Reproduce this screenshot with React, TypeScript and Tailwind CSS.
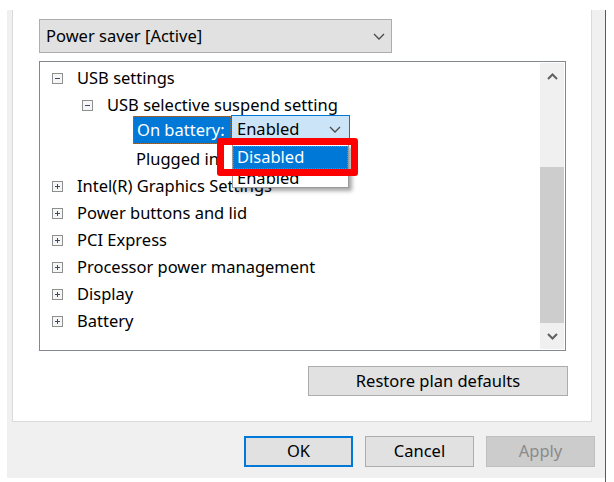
import type { ReactNode } from "react";

function TreeBox({ open }: { open: boolean }) {
  return (
    <svg width="11" height="11" viewBox="0 0 11 11" className="shrink-0">
      <rect x="0.5" y="0.5" width="10" height="10" fill="#f6f6f6" stroke="#8e8f8f" />
      <path d="M3 5.5h5" stroke="#3b4a63" />
      {!open && <path d="M5.5 3v5" stroke="#3b4a63" />}
    </svg>
  );
}

function Chevron({ className = "" }: { className?: string }) {
  return (
    <svg width="12" height="7" viewBox="0 0 12 7" className={className}>
      <path d="M1 1l5 5 5-5" stroke="#4a4a4a" strokeWidth="1.3" fill="none" />
    </svg>
  );
}

function ScrollArrow({ up }: { up?: boolean }) {
  return (
    <svg width="11" height="7" viewBox="0 0 11 7">
      <path
        d={up ? "M1 6l4.5-4.5L10 6" : "M1 1l4.5 4.5L10 1"}
        stroke="#606060"
        strokeWidth="2"
        fill="none"
      />
    </svg>
  );
}

function Row({
  indent,
  open,
  children,
}: {
  indent: string;
  open?: boolean;
  children: ReactNode;
}) {
  return (
    <div className={`flex h-[27px] items-center ${indent}`}>
      <TreeBox open={!!open} />
      <span className="ml-[14px] whitespace-nowrap">{children}</span>
    </div>
  );
}

function DialogButton({
  children,
  variant = "normal",
}: {
  children: ReactNode;
  variant?: "default" | "normal" | "disabled";
}) {
  const look =
    variant === "default"
      ? "border-2 border-[#0078d7] bg-[#e1e1e1] text-black"
      : variant === "disabled"
        ? "border border-[#bfbfbf] bg-[#cccccc] text-[#8a8a8a]"
        : "border border-[#adadad] bg-[#e1e1e1] text-black";
  return (
    <div className={`flex h-[31px] w-[109px] items-center justify-center ${look}`}>
      {children}
    </div>
  );
}

export default function App() {
  return (
    <div className="flex h-[482px] w-[614px] overflow-hidden bg-white pl-[7px] pt-[10px] font-['Noto_Sans',sans-serif] text-[16.5px] leading-none text-black">
      <div className="flex h-[468px] w-[598px] flex-col bg-[#f0f0f0]">
        <div className="ml-[5px] h-[412px] w-[580px] border-x border-b border-[#dadada] bg-white pl-[26px] pt-[9px]">
          {/* power plan picker */}
          <div className="flex h-[34px] w-[353px] items-center justify-between border border-[#adadad] bg-[#e1e1e1] pl-[6px] pr-[6px]">
            <span>Power saver [Active]</span>
            <Chevron />
          </div>

          {/* settings tree */}
          <div className="relative mt-[8px] flex h-[290px] w-[527px] border border-[#828790] bg-white">
            <div className="flex-1 pt-[3px]">
              <Row indent="pl-[12px]" open>
                USB settings
              </Row>
              <Row indent="pl-[42px]" open>
                USB selective suspend setting
              </Row>
              <div className="flex h-[27px] items-start pl-[93px]">
                <div className="-mt-[3px] flex h-[28px] w-[98px] items-center border border-dotted border-[#9a6a3a] bg-[#0078d7] px-[3px] text-white">
                  On battery:
                </div>
                <div className="-mt-[4px] flex h-[28px] w-[119px] items-center justify-between border border-[#0078d7] bg-[#cce4f7] pl-[5px] pr-[8px]">
                  <span>Enabled</span>
                  <Chevron />
                </div>
              </div>
              <div className="flex h-[27px] items-center pl-[96px]">
                <span className="whitespace-nowrap">Plugged in:</span>
              </div>
              <Row indent="pl-[12px]">Intel(R) Graphics Settings</Row>
              <Row indent="pl-[12px]">Power buttons and lid</Row>
              <Row indent="pl-[12px]">PCI Express</Row>
              <Row indent="pl-[12px]">Processor power management</Row>
              <Row indent="pl-[12px]">Display</Row>
              <Row indent="pl-[12px]">Battery</Row>
            </div>

            <div className="my-[1px] mr-[1px] flex w-[24px] flex-col bg-[#f0f0f0]">
              <div className="flex h-[26px] items-center justify-center">
                <ScrollArrow up />
              </div>
              <div className="h-[78px]" />
              <div className="h-[156px] bg-[#cdcdcd]" />
              <div className="flex flex-1 items-center justify-center">
                <ScrollArrow />
              </div>
            </div>

            {/* open dropdown list */}
            <div className="absolute left-[192px] top-[82px] h-[44px] w-[117px] border border-[#9a9a9a] bg-white pt-[1px] shadow-[3px_3px_4px_rgba(0,0,0,0.35)]">
              <div className="flex h-[23px] items-center border border-dotted border-[#b07a3a] bg-[#0078d7] pl-[3px] text-white">
                Disabled
              </div>
              <div className="flex h-[18px] items-center pl-[4px]">Enabled</div>
            </div>

            {/* callout */}
            <div className="absolute left-[177px] top-[76px] h-[38px] w-[141px] rounded-[3px] border-[7px] border-[#ff0000]" />
          </div>

          <div className="ml-[269px] mt-[15px] flex h-[30px] w-[260px] items-center justify-center border border-[#adadad] bg-[#e1e1e1]">
            Restore plan defaults
          </div>
        </div>

        <div className="flex justify-end gap-[12px] pr-[10px] pt-[14px]">
          <DialogButton variant="default">OK</DialogButton>
          <DialogButton>Cancel</DialogButton>
          <DialogButton variant="disabled">Apply</DialogButton>
        </div>
      </div>
      <div className="h-[472px] w-px bg-[#5a5a5a]" />
    </div>
  );
}
